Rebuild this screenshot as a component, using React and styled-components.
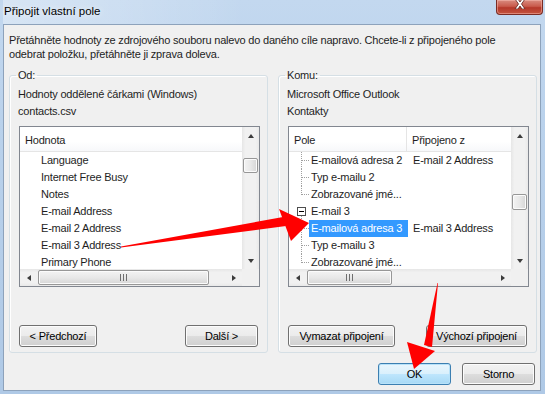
import React from "react";
import styled, { createGlobalStyle, css } from "styled-components";

const GlobalStyle = createGlobalStyle`
  html, body {
    margin: 0;
    padding: 0;
    background: #ffffff;
  }
  body {
    font-family: "Liberation Sans", Arial, sans-serif;
    font-size: 11px;
    letter-spacing: -0.2px;
    color: #1e1e1e;
  }
`;

const sourceRows = [
  "Language",
  "Internet Free Busy",
  "Notes",
  "E-mail Address",
  "E-mail 2 Address",
  "E-mail 3 Address",
  "Primary Phone",
];

const targetRows = [
  { name: "E-mailová adresa 2", mapped: "E-mail 2 Address", line: "full" },
  { name: "Typ e-mailu 2", line: "full" },
  { name: "Zobrazované jmé...", line: "last" },
  { name: "E-mail 3", parent: true },
  { name: "E-mailová adresa 3", mapped: "E-mail 3 Address", line: "full", selected: true },
  { name: "Typ e-mailu 3", line: "full" },
  { name: "Zobrazované jmé...", line: "last" },
];

const App = () => {
  return (
    <>
      <GlobalStyle />
      <Window>
        <TitleBar>
          <Title>Připojit vlastní pole</Title>
          <CloseButton>
            <svg width="12" height="10" viewBox="0 0 12 10">
              <path
                d="M1 0 L4 0 L6 3 L8 0 L11 0 L7.5 5 L11 10 L8 10 L6 7 L4 10 L1 10 L4.5 5 Z"
                fill="#ffffff"
                stroke="#5a1f19"
                strokeWidth="0.8"
              />
            </svg>
          </CloseButton>
        </TitleBar>

        <Content>
          <Description>
            Přetáhněte hodnoty ze zdrojového souboru nalevo do daného cíle napravo. Chcete-li z připojeného pole
            <br />
            odebrat položku, přetáhněte ji zprava doleva.
          </Description>

          <Groups>
            <Group>
              <Legend>Od:</Legend>
              <Info>Hodnoty oddělené čárkami (Windows)</Info>
              <Info>contacts.csv</Info>
              <ListBox>
                <ListMain>
                  <Header>
                    <HeaderCell>Hodnota</HeaderCell>
                  </Header>
                  {sourceRows.map((row) => (
                    <SourceRow key={row}>{row}</SourceRow>
                  ))}
                </ListMain>
                <VScroll thumbTop={14} thumbHeight={15} />
                <HScroll thumbLeft={1} thumbWidth={171} />
                <Corner />
              </ListBox>
              <ButtonRow>
                <Button width={78}>&lt; Předchozí</Button>
                <Button width={73}>Další &gt;</Button>
              </ButtonRow>
            </Group>

            <Group>
              <Legend>Komu:</Legend>
              <Info>Microsoft Office Outlook</Info>
              <Info>Kontakty</Info>
              <ListBox>
                <ListMain>
                  <Header>
                    <HeaderCell width={118} divider>
                      Pole
                    </HeaderCell>
                    <HeaderCell>Připojeno z</HeaderCell>
                  </Header>
                  {targetRows.map((row, i) => (
                    <TargetRow key={i}>
                      <TreeCell>
                        {row.parent ? (
                          <Connector>
                            <MinusBox />
                          </Connector>
                        ) : (
                          <Connector line={row.line} />
                        )}
                        <FieldName selected={row.selected}>{row.name}</FieldName>
                      </TreeCell>
                      <Mapped>{row.mapped}</Mapped>
                    </TargetRow>
                  ))}
                </ListMain>
                <VScroll thumbTop={50} thumbHeight={16} />
                <HScroll thumbLeft={1} thumbWidth={85} />
                <Corner />
              </ListBox>
              <ButtonRow>
                <Button width={107}>Vymazat připojení</Button>
                <Button width={101}>Výchozí připojení</Button>
              </ButtonRow>
            </Group>
          </Groups>

          <Footer>
            <Button width={73} primary>
              OK
            </Button>
            <Button width={73}>Storno</Button>
          </Footer>
        </Content>

        <Annotations width="545" height="394" viewBox="0 0 545 394">
          <polygon points="121,246.5 283,217 286,226 121,247.5" fill="#ff0000" />
          <polygon points="279,209 309,223 291,241" fill="#ff0000" />
          <polygon points="438,283 432,347 424,345 437.5,283" fill="#ff0000" />
          <polygon points="407,342 435,351 414,369" fill="#ff0000" />
        </Annotations>
      </Window>
    </>
  );
};

const VScroll = ({ thumbTop, thumbHeight }) => (
  <VTrack>
    <ArrowButton>
      <Triangle dir="up" />
    </ArrowButton>
    <VTrackBody>
      <VThumb style={{ marginTop: thumbTop, height: thumbHeight }} />
    </VTrackBody>
    <ArrowButton>
      <Triangle dir="down" />
    </ArrowButton>
  </VTrack>
);

const HScroll = ({ thumbLeft, thumbWidth }) => (
  <HTrack>
    <ArrowButton>
      <Triangle dir="left" />
    </ArrowButton>
    <HTrackBody>
      <HThumb style={{ marginLeft: thumbLeft, width: thumbWidth }}>
        <Grip />
      </HThumb>
    </HTrackBody>
    <ArrowButton>
      <Triangle dir="right" />
    </ArrowButton>
  </HTrack>
);

const Window = styled.div`
  position: relative;
  width: 545px;
  height: 394px;
  box-sizing: border-box;
  display: flex;
  flex-direction: column;
  padding: 0 4px 3px 3px;
  overflow: hidden;
  background: linear-gradient(
    180deg,
    #c3d8ef 0%,
    #bad2ec 30%,
    #afc9e6 100%
  );
`;

const TitleBar = styled.div`
  height: 24px;
  flex-shrink: 0;
  display: flex;
  align-items: flex-start;
  background: linear-gradient(
    90deg,
    rgba(255, 255, 255, 0.35) 0%,
    rgba(255, 255, 255, 0.15) 25%,
    rgba(255, 255, 255, 0) 45%
  );
`;

const Title = styled.div`
  padding: 4px 0 0 1px;
  line-height: 15px;
  font-size: 11.5px;
  letter-spacing: 0;
  color: #000;
  text-shadow: 0 0 6px rgba(255, 255, 255, 0.9);
`;

const CloseButton = styled.div`
  margin-left: auto;
  margin-right: -2px;
  width: 47px;
  height: 15px;
  box-sizing: border-box;
  display: flex;
  align-items: flex-start;
  justify-content: center;
  overflow: hidden;
  border: 1px solid #7a2c24;
  border-top: none;
  border-radius: 0 0 4px 4px;
  background: linear-gradient(180deg, #d98b7f 0%, #c95b4c 45%, #b5382a 55%, #c4553f 100%);
  box-shadow: inset 0 0 0 1px rgba(255, 200, 190, 0.45);

  svg {
    margin-top: -1px;
  }
`;

const Content = styled.div`
  flex: 1;
  display: flex;
  flex-direction: column;
  background: #f0f0f0;
  border: 1px solid #8da2bb;
`;

const Description = styled.div`
  flex-shrink: 0;
  padding: 8px 5px 0;
  line-height: 14px;
  white-space: nowrap;
`;

const Groups = styled.div`
  flex-shrink: 0;
  display: grid;
  grid-template-columns: 259px 259px;
  column-gap: 10px;
  margin: 7px 0 0 5px;
  height: 285px;
`;

const Group = styled.fieldset`
  margin: 0;
  min-width: 0;
  display: flex;
  flex-direction: column;
  padding: 4px 9px 5px 8px;
  border: 1px solid #d5dfe5;
  border-radius: 3px;
  box-shadow: inset 1px 1px 0 #ffffff;
`;

const Legend = styled.legend`
  padding: 0 2px;
  margin-left: -2px;
  line-height: 14px;
`;

const Info = styled.div`
  line-height: 17px;
`;

const ListBox = styled.div`
  flex-shrink: 0;
  margin: 6px 0 0 1px;
  width: 241px;
  height: 161px;
  box-sizing: border-box;
  border: 1px solid #828790;
  background: #ffffff;
  display: grid;
  grid-template-columns: 1fr 17px;
  grid-template-rows: 1fr 17px;
`;

const ListMain = styled.div`
  overflow: hidden;
  min-width: 0;
`;

const Header = styled.div`
  display: flex;
  height: 25px;
  box-sizing: border-box;
  border-bottom: 1px solid #e5e5e5;
  background: linear-gradient(180deg, #ffffff 0%, #ffffff 60%, #f7f8fa 100%);
`;

const HeaderCell = styled.div`
  ${({ width }) => (width ? `width: ${width}px;` : "flex: 1;")}
  flex-shrink: 0;
  box-sizing: border-box;
  padding-left: 5px;
  line-height: 26px;
  ${({ divider }) => divider && "border-right: 1px solid #e5e5e5;"}
`;

const SourceRow = styled.div`
  height: 17px;
  line-height: 17px;
  padding-left: 21px;
  white-space: nowrap;
`;

const TargetRow = styled.div`
  display: flex;
  height: 17px;
  line-height: 17px;
  white-space: nowrap;
`;

const TreeCell = styled.div`
  display: flex;
  width: 119px;
  flex-shrink: 0;
`;

const Connector = styled.div`
  position: relative;
  width: 20px;
  flex-shrink: 0;
  ${({ line }) =>
    line &&
    css`
      &::before {
        content: "";
        position: absolute;
        left: 12px;
        top: 0;
        height: ${line === "last" ? "9px" : "17px"};
        border-left: 1px dotted #a0a0a0;
      }
      &::after {
        content: "";
        position: absolute;
        left: 13px;
        top: 8px;
        width: 7px;
        border-top: 1px dotted #a0a0a0;
      }
    `}
`;

const MinusBox = styled.div`
  position: absolute;
  left: 8px;
  top: 4px;
  width: 9px;
  height: 9px;
  box-sizing: border-box;
  border: 1px solid #4d4d4d;
  background: #ffffff;

  &::before {
    content: "";
    position: absolute;
    left: 1px;
    top: 3px;
    width: 5px;
    height: 1px;
    background: #000;
  }
  &::after {
    content: "";
    position: absolute;
    left: 3px;
    top: 8px;
    height: 9px;
    border-left: 1px dotted #a0a0a0;
  }
`;

const FieldName = styled.div`
  flex: 1;
  padding-left: 2px;
  overflow: hidden;
  ${({ selected }) =>
    selected &&
    css`
      background: #3399ff;
      color: #ffffff;
    `}
`;

const Mapped = styled.div`
  padding-left: 5px;
`;

const VTrack = styled.div`
  display: flex;
  flex-direction: column;
  background: linear-gradient(90deg, #e6e6e6 0%, #f1f1f1 20%, #f1f1f1 80%, #e9e9e9 100%);
`;

const HTrack = styled.div`
  display: flex;
  background: linear-gradient(180deg, #e6e6e6 0%, #f1f1f1 20%, #f1f1f1 80%, #e9e9e9 100%);
`;

const VTrackBody = styled.div`
  flex: 1;
  display: flex;
  flex-direction: column;
  align-items: center;
`;

const HTrackBody = styled.div`
  flex: 1;
  display: flex;
  align-items: center;
`;

const ArrowButton = styled.div`
  width: 17px;
  height: 17px;
  flex-shrink: 0;
  display: flex;
  align-items: center;
  justify-content: center;
`;

const Triangle = styled.div`
  width: 0;
  height: 0;
  ${({ dir }) => {
    if (dir === "up")
      return "border-left: 3.5px solid transparent; border-right: 3.5px solid transparent; border-bottom: 4px solid #3c3c3c;";
    if (dir === "down")
      return "border-left: 3.5px solid transparent; border-right: 3.5px solid transparent; border-top: 4px solid #3c3c3c;";
    if (dir === "left")
      return "border-top: 3.5px solid transparent; border-bottom: 3.5px solid transparent; border-right: 4px solid #3c3c3c;";
    return "border-top: 3.5px solid transparent; border-bottom: 3.5px solid transparent; border-left: 4px solid #3c3c3c;";
  }}
`;

const VThumb = styled.div`
  width: 15px;
  box-sizing: border-box;
  border: 1px solid #979797;
  border-radius: 2px;
  background: linear-gradient(90deg, #f3f3f3 0%, #e8e8e8 50%, #d6d6d6 100%);
  box-shadow: inset 0 0 0 1px #fbfbfb;
`;

const HThumb = styled.div`
  height: 15px;
  box-sizing: border-box;
  display: flex;
  align-items: center;
  justify-content: center;
  border: 1px solid #979797;
  border-radius: 2px;
  background: linear-gradient(180deg, #f3f3f3 0%, #e8e8e8 50%, #d6d6d6 100%);
  box-shadow: inset 0 0 0 1px #fbfbfb;
`;

const Grip = styled.div`
  width: 7px;
  height: 7px;
  background: repeating-linear-gradient(
    90deg,
    #6f6f6f 0px,
    #6f6f6f 1px,
    transparent 1px,
    transparent 3px
  );
`;

const Corner = styled.div`
  background: #f0f0f0;
`;

const ButtonRow = styled.div`
  margin-top: auto;
  display: flex;
  justify-content: space-between;
  padding-left: 1px;
`;

const Button = styled.div`
  width: ${({ width }) => width}px;
  height: 22px;
  box-sizing: border-box;
  display: flex;
  align-items: center;
  justify-content: center;
  border: 1px solid ${({ primary }) => (primary ? "#3c7fb1" : "#707070")};
  border-radius: 3px;
  background: ${({ primary }) =>
    primary
      ? "linear-gradient(180deg, #eaf6fd 0%, #d9f0fc 50%, #bee6fd 51%, #a7d9f5 100%)"
      : "linear-gradient(180deg, #f2f2f2 0%, #ebebeb 50%, #dddddd 51%, #cfcfcf 100%)"};
  box-shadow: inset 0 0 0 1px ${({ primary }) => (primary ? "#b8e2f9" : "#fcfcfc")};
  color: #000;
`;

const Footer = styled.div`
  flex-shrink: 0;
  display: flex;
  justify-content: flex-end;
  gap: 11px;
  margin-top: 10px;
  padding-right: 5px;
`;

const Annotations = styled.svg`
  position: absolute;
  left: 0;
  top: 0;
  pointer-events: none;
`;

export default App;
